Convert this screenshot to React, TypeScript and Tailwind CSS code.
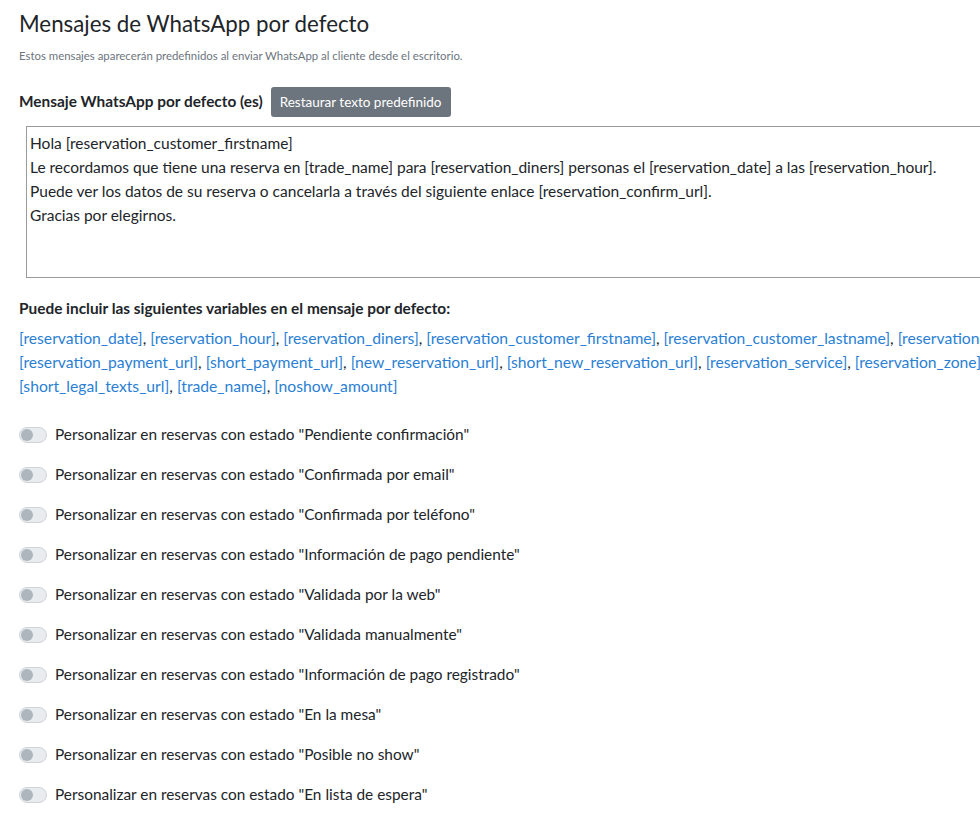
import React, { useState } from 'react';

const STATES = [
  'Pendiente confirmación',
  'Confirmada por email',
  'Confirmada por teléfono',
  'Información de pago pendiente',
  'Validada por la web',
  'Validada manualmente',
  'Información de pago registrado',
  'En la mesa',
  'Posible no show',
  'En lista de espera',
];

const VAR_LINES = [
  [
    'reservation_date',
    'reservation_hour',
    'reservation_diners',
    'reservation_customer_firstname',
    'reservation_customer_lastname',
    'reservation_customer_phone',
  ],
  [
    'reservation_payment_url',
    'short_payment_url',
    'new_reservation_url',
    'short_new_reservation_url',
    'reservation_service',
    'reservation_zone',
    'legal_texts_url',
  ],
  ['short_legal_texts_url', 'trade_name', 'noshow_amount'],
];

const DEFAULT_TEXT =
  'Hola [reservation_customer_firstname]\n' +
  'Le recordamos que tiene una reserva en [trade_name] para [reservation_diners] personas el [reservation_date] a las [reservation_hour].\n' +
  'Puede ver los datos de su reserva o cancelarla a través del siguiente enlace [reservation_confirm_url].\n' +
  'Gracias por elegirnos.';

const Toggle: React.FC<{ on: boolean; onClick: () => void }> = ({ on, onClick }) => (
  <button
    type="button"
    onClick={onClick}
    className={`relative w-[28px] h-[16px] rounded-full border shrink-0 ${
      on ? 'bg-[#0d6efd] border-[#0d6efd]' : 'bg-[#e9ecef] border-[#cfd4d9]'
    }`}
  >
    <span
      className={`absolute top-[1px] w-[12px] h-[12px] rounded-full ${
        on ? 'left-[13px] bg-white' : 'left-[1px] bg-[#adb5bd]'
      }`}
    ></span>
  </button>
);

export default function App() {
  const [text, setText] = useState(DEFAULT_TEXT);
  const [toggles, setToggles] = useState<boolean[]>(STATES.map(() => false));

  return (
    <div className="w-full overflow-hidden bg-white text-[#212529]" style={{ fontFamily: 'Lato, "Noto Sans", sans-serif' }}>
      <div className="w-[1180px] pl-[19px] pt-[8px] pb-[10px]">
        <h1 className="text-[22.3px] leading-[32px] font-normal text-[#212529]">Mensajes de WhatsApp por defecto</h1>
        <p className="mt-[8px] text-[11.4px] leading-[16px] text-[#6c757d]">
          Estos mensajes aparecerán predefinidos al enviar WhatsApp al cliente desde el escritorio.
        </p>

        <div className="mt-[23px] flex items-center gap-[8px]">
          <span className="text-[15.4px] font-bold">Mensaje WhatsApp por defecto (es)</span>
          <button
            type="button"
            onClick={() => setText(DEFAULT_TEXT)}
            className="h-[30px] px-[9px] rounded-[3px] bg-[#6c757d] text-white text-[13.5px]"
          >
            Restaurar texto predefinido
          </button>
        </div>

        <textarea
          value={text}
          onChange={(e) => setText(e.target.value)}
          className="block mt-[9px] ml-[7px] w-[1140px] h-[152px] border border-[#9a9a9a] px-[3px] py-[4px] text-[15.5px] leading-[24px] resize-none outline-none"
        />

        <div className="mt-[20px] text-[15.4px] font-bold leading-[20px]">
          Puede incluir las siguientes variables en el mensaje por defecto:
        </div>
        <div className="mt-[8px] text-[15.7px] leading-[24px]">
          {VAR_LINES.map((line, li) => (
            <div key={li} className="whitespace-nowrap">
              {line.map((v, i) => (
                <React.Fragment key={v}>
                  <a href="#" className="text-[#2a7fd4]">[{v}]</a>
                  {(i < line.length - 1 || li < VAR_LINES.length - 1) && ', '}
                </React.Fragment>
              ))}
            </div>
          ))}
        </div>

        <div className="mt-[25px] flex flex-col gap-[16px]">
          {STATES.map((s, i) => (
            <div key={s} className="flex items-center gap-[8px] h-[24px]">
              <Toggle
                on={toggles[i]}
                onClick={() => setToggles(toggles.map((t, j) => (j === i ? !t : t)))}
              />
              <span className="text-[15.4px]">Personalizar en reservas con estado "{s}"</span>
            </div>
          ))}
        </div>
      </div>
    </div>
  );
}
